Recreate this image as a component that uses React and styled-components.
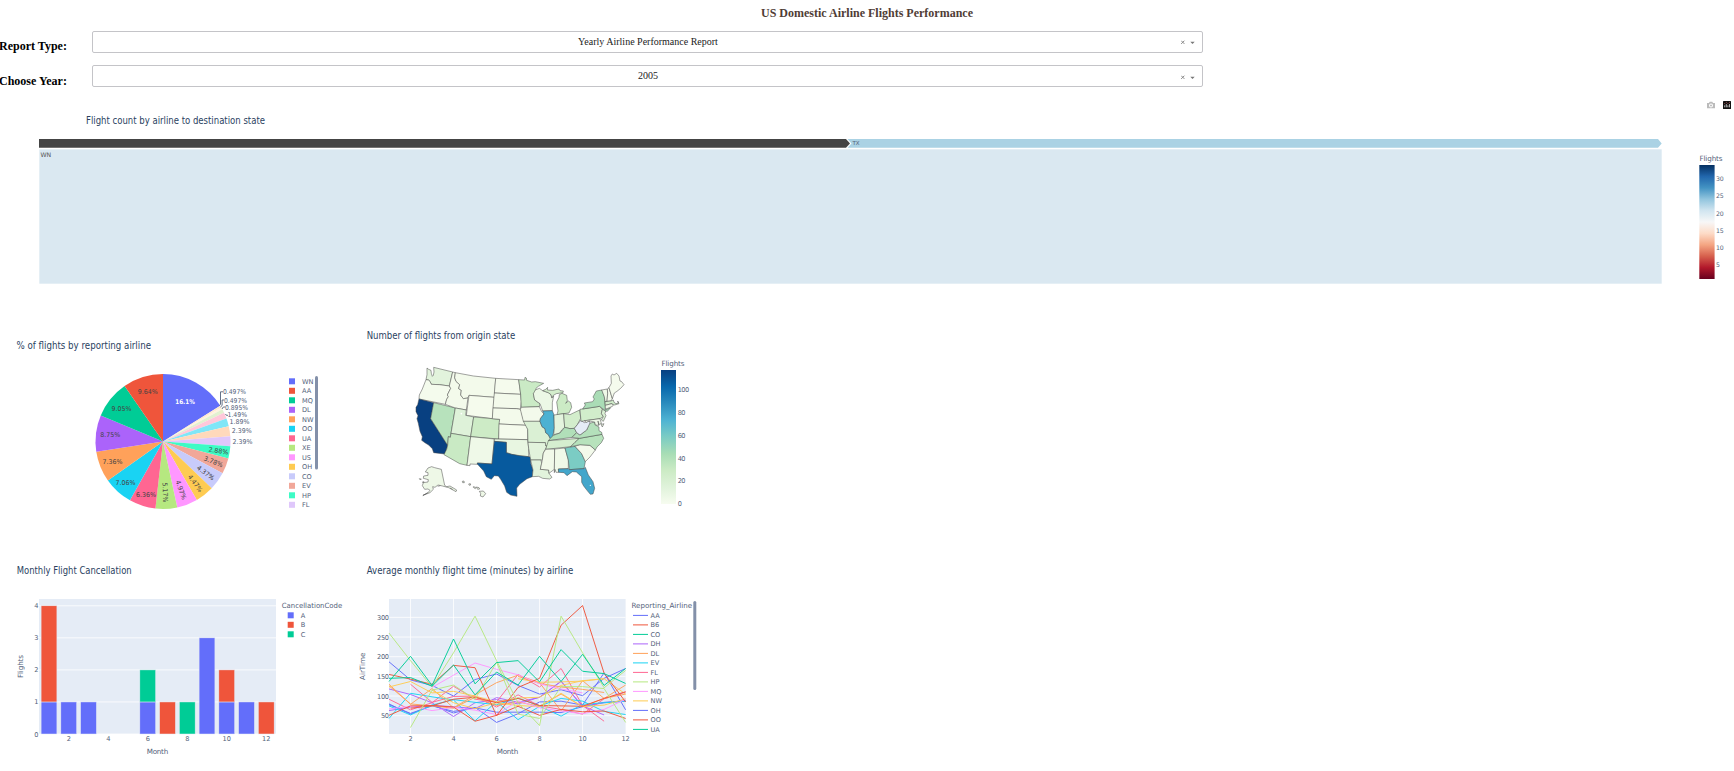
import React from 'react';
import styled, { createGlobalStyle } from 'styled-components';

const GlobalStyle = createGlobalStyle`
  body {
    margin: 0;
    background: #fff;
    overflow: hidden;
    font-family: "Liberation Serif", serif;
  }
`;

const Page = styled.main`
  width: 1734px;
  height: 771px;
  overflow: hidden;
`;

const Heading = styled.h1`
  margin: 0;
  padding-top: 5px;
  height: 26px;
  box-sizing: border-box;
  text-align: center;
  color: #503d36;
  font-size: 12px;
  line-height: 16px;
`;

const Fields = styled.section`
  display: flex;
  flex-direction: column;
  gap: 12px;
  padding-top: 5px;
  height: 64px;
  box-sizing: border-box;
`;

const Field = styled.div`
  display: grid;
  grid-template-columns: 92px 1111px;
  height: 22px;
`;

const FieldLabel = styled.label`
  font-size: 12px;
  font-weight: bold;
  line-height: 16px;
  padding-top: ${(p) => p.$drop}px;
  margin-left: -1px;
  white-space: nowrap;
`;

const Select = styled.div`
  display: flex;
  align-items: center;
  box-sizing: border-box;
  height: 22px;
  border: 1px solid #c4c4c8;
  border-radius: 2px;
  padding-right: 7px;
`;

const SelectValue = styled.span`
  flex: 1;
  padding-left: 22px;
  text-align: center;
  font-size: 10px;
  line-height: 20px;
  color: #222;
`;

const Charts = styled.section`
  display: grid;
  grid-template-columns: 360px 360px;
  grid-template-rows: 235px 216px;
`;

const Chart = styled.svg`
  display: block;
  overflow: visible;
  font-family: "DejaVu Sans", Verdana, sans-serif;
  font-size: ${(p) => p.$size || 6.6}px;
  fill: #53627a;
`;

const ChartTitle = styled.text`
  font-family: "DejaVu Sans Condensed", "DejaVu Sans", sans-serif;
  font-stretch: condensed;
  font-size: 9.7px;
  fill: #2a3f5f;
`;

function Title({ x, y, w, children }) {
  return (
    <ChartTitle x={x} y={y} textLength={w} lengthAdjust="spacingAndGlyphs">
      {children}
    </ChartTitle>
  );
}

function Dropdown({ label, value, drop, iconDrop }) {
  return (
    <Field>
      <FieldLabel $drop={drop}>{label}</FieldLabel>
      <Select>
        <SelectValue>{value}</SelectValue>
        <svg width="14" height="8" viewBox={`0 ${-iconDrop} 14 8`}>
          <path d="M.2 2.7l3.2 3.2m0-3.2l-3.2 3.2" stroke="#888" />
          <path d="M9.3 3.7h4.4l-2.2 2.2z" fill="#777" />
        </svg>
      </Select>
    </Field>
  );
}

const RDBU = ['#053061', '#2166ac', '#4393c3', '#92c5de', '#d1e5f0', '#f7f7f7', '#fddbc7', '#f4a582', '#d6604d', '#b2182b', '#67001f'];
const GNBU = ['#084081', '#0868ac', '#2b8cbe', '#4eb3d3', '#7bccc4', '#a8ddb5', '#ccebc5', '#e0f3db', '#f7fcf0'];

function Scale({ id, colors, x, y, w, h }) {
  return (
    <>
      <linearGradient id={id} x1="0" y1="0" x2="0" y2="1">
        {colors.map((c, i) => (
          <stop key={c} offset={i / (colors.length - 1)} stopColor={c} />
        ))}
      </linearGradient>
      <rect x={x} y={y} width={w} height={h} fill={`url(#${id})`} />
    </>
  );
}

function Treemap() {
  return (
    <Chart width="1734" height="230" viewBox="0 90 1734 230" $size={6.2}>
      <Title x="86" y="124" w="179">Flight count by airline to destination state</Title>
      <path d="M39 139H846l4 4.4-4 4.4H39z" fill="#444" />
      <path d="M847.5 139H1658l3.7 4.4-3.7 4.4H847.5l4-4.4z" fill="#aad2e4" />
      <rect x="39.3" y="149.3" width="1622.4" height="134.4" fill="#dae8f1" />
      <text x="852.5" y="145.4" fontSize="5.5">TX</text>
      <text x="40.5" y="157.2" fill="#555">WN</text>
      <path fill="#bbb" fillRule="evenodd" d="M1707 103h2l.7-1.2h2.6l.7 1.2h2v5.2h-8zM1711 103.5a2 2 0 100 4 2 2 0 000-4zM1711 104.5a1 1 0 110 2 1 1 0 010-2z" />
      <rect x="1723" y="101" width="8" height="8" fill="#111" rx=".5" />
      <path d="M1724.7 107.3v-2m1.6 2v-3.2m1.6 3.2v-2m1.6 2v-3.2" stroke="#ddd" strokeWidth=".8" />
      <path d="M1724.3 103.6h.8m.8-1.2h.8m.8 1.2h.8m.8-1.2h.8" stroke="#c66" strokeWidth=".8" />
      <text x="1699.5" y="161" fontSize="7.2" textLength="23">Flights</text>
      <Scale id="rdbu" colors={RDBU} x={1699.3} y={165} w={15.3} h={114} />
      {[30, 25, 20, 15, 10, 5].map((n, i) => (
        <text key={n} x="1716" y={181 + i * 17.25} textLength={n > 9 ? 7.7 : 4}>{n}</text>
      ))}
    </Chart>
  );
}

const SLICES = [
  [16.1, '#636efa'], [0.497, '#ffe9cf'], [0.497, '#fff3df'], [0.895, '#e2f1d0'],
  [1.49, '#ffc8da'], [1.89, '#7fe6f7'], [2.39, '#ffd9bb'], [2.39, '#dfc7fb'],
  [2.88, '#3dfbc5'], [3.78, '#f1a799'], [4.37, '#c8cbfb'], [4.47, '#fecb52'],
  [4.97, '#ff97ff'], [5.17, '#b6e880'], [6.36, '#ff6692'], [7.06, '#19d3f3'],
  [7.36, '#ffa15a'], [8.75, '#ab63fa'], [9.05, '#00cc96'], [9.64, '#ef553b'],
];

const PIE_LEGEND = [
  ['WN', '#636efa'], ['AA', '#ef553b'], ['MQ', '#00cc96'], ['DL', '#ab63fa'],
  ['NW', '#ffa15a'], ['OO', '#19d3f3'], ['UA', '#ff6692'], ['XE', '#b6e880'],
  ['US', '#ff97ff'], ['OH', '#fecb52'], ['CO', '#c8cbfb'], ['EV', '#f1a799'],
  ['HP', '#3dfbc5'], ['FL', '#dfc7fb'],
];

const INNER_LABELS = [
  ['9.64%', 147.7, 391.6, 0], ['9.05%', 121.6, 408.7, 0], ['8.75%', 110.2, 434.7, 0],
  ['7.36%', 112.4, 461.6, 0], ['7.06%', 125.6, 482.7, 0], ['6.36%', 146, 494.8, 0],
  ['5.17%', 165.4, 492.5, 88], ['4.97%', 181.2, 489.8, 70], ['4.47%', 195.4, 483.2, 53],
  ['4.37%', 205.8, 472.7, 37], ['3.78%', 213.4, 461.5, 22], ['2.88%', 218.4, 450.6, 9],
];

const OUTER_LABELS = [
  ['0.497%', 223, 391.8, 23], ['0.497%', 224, 400, 23], ['0.895%', 225, 407, 23],
  ['1.49%', 227.5, 414.8, 19.5], ['1.89%', 229.5, 421.8, 20], ['2.39%', 231.7, 430.8, 20], ['2.39%', 232.5, 441.8, 20],
];

function Pie() {
  const cx = 163, cy = 441.5, r = 67.5;
  let angle = 0;
  const point = (a) => `${cx + r * Math.sin(a)} ${cy - r * Math.cos(a)}`;
  return (
    <Chart width="360" height="235" viewBox="0 320 360 235">
      <Title x="16.5" y="349" w="134.5">% of flights by reporting airline</Title>
      {SLICES.map(([v, color], i) => {
        const start = angle;
        angle += (v / 100.009) * Math.PI * 2;
        return <path key={i} fill={color} d={`M${cx} ${cy}L${point(start)}A${r} ${r} 0 0 1 ${point(angle)}z`} />;
      })}
      <text x="175.3" y="404" fill="#fff" fontWeight="bold" fontSize="6.4" textLength="19.5" lengthAdjust="spacingAndGlyphs">16.1%</text>
      {INNER_LABELS.map(([t, x, y, a]) => (
        <text key={t} transform={`translate(${x} ${y}) rotate(${a})`} x="-10" y="2.5" fill="#444" textLength="20" lengthAdjust="spacingAndGlyphs">{t}</text>
      ))}
      {OUTER_LABELS.map(([t, x, y, w], i) => (
        <text key={i} x={x} y={y + 2.5} textLength={w} lengthAdjust="spacingAndGlyphs">{t}</text>
      ))}
      <path d="M219.5 405.5l1-1.2V391.8h2.5M220.5 407l1.6-1.5V400h2M222 409l1.3-2h2M225.5 414l.8 1.3h1.7" fill="none" stroke="#53627a" strokeWidth=".9" />
      {PIE_LEGEND.map(([n, color], i) => (
        <g key={n}>
          <rect x="289" y={378.3 + i * 9.5} width="6" height="6" fill={color} />
          <text x="302" y={383.8 + i * 9.5}>{n}</text>
        </g>
      ))}
      <rect x="315" y="376" width="3" height="93.5" rx="1.5" fill="#8390a9" />
    </Chart>
  );
}

const STATES = [
  ['WA', '#e2f3dc', '201,144 206,148 213,151 214,160 217,169 220,166 222,156 221,142 278,156 268,198 238,194 214,193 210,184 205,180 198,179 201,164'],
  ['OR', '#f4fbed', '198,179 205,180 210,184 214,193 238,194 268,198 272,205 262,225 265,230 260,238 256,253 177,237 178,225 187,207'],
  ['CA', '#084081', '177,237 221,248 212,296 263,376 260,388 254,402 221,398 217,386 206,375 196,369 185,361 187,350 180,334 175,310 171,296 174,287 168,275 168,262 173,254'],
  ['NV', '#b7e2bc', '221,248 286,264 273,340 271,352 265,350 263,376 212,296'],
  ['ID', '#f3faeb', '278,156 286,158 284,173 288,184 299,194 296,206 304,211 302,225 310,236 324,233 319,270 286,264 256,253 260,238 265,230 262,225 272,205 268,198'],
  ['MT', '#f3faeb', '286,158 340,168 407,175 403,232 327,226 324,233 310,236 302,225 304,211 296,206 299,194 288,184 284,173'],
  ['WY', '#f5fbed', '327,226 403,232 397,296 319,286'],
  ['UT', '#def2d9', '286,264 319,270 317,286 341,291 332,350 273,340'],
  ['CO', '#cdebc6', '341,291 419,298 416,357 332,350'],
  ['AZ', '#c9eac4', '273,340 332,350 321,436 299,431 252,404 260,388 263,376 265,350 271,352'],
  ['NM', '#eff9e8', '332,350 403,357 396,432 352,429 353,433 330,432 330,437 321,436'],
  ['ND', '#f5fbed', '407,175 476,179 479,200 482,223 403,219'],
  ['SD', '#f3faeb', '403,219 482,223 484,245 481,268 470,266 399,264'],
  ['NE', '#f3faeb', '399,264 470,266 481,268 485,275 488,291 492,301 500,316 417,312 419,298 397,296'],
  ['KS', '#f5fbed', '417,312 500,316 503,328 503,359 416,357'],
  ['OK', '#e8f6e1', '403,357 503,359 506,385 506,410 480,408 455,403 439,398 439,367 403,364'],
  ['TX', '#075a9e', '403,364 439,367 439,398 455,403 480,407 506,410 512,411 512,430 519,450 517,470 501,476 479,493 470,504 471,529 452,525 440,517 434,498 422,478 415,468 403,467 394,478 379,470 371,453 352,432 352,429 396,432'],
  ['MN', '#caeac5', '476,179 494,180 495,172 499,174 500,181 515,186 526,185 551,190 535,199 528,205 526,215 520,221 524,240 540,251 538,260 484,262 482,223'],
  ['IA', '#f3faeb', '484,262 538,260 545,275 552,282 541,296 540,304 490,304 481,268'],
  ['MO', '#daf0d4', '490,304 540,304 546,320 555,326 557,338 565,344 571,356 561,378 555,378 556,368 504,367 503,328'],
  ['AR', '#e2f3dc', '504,367 556,368 557,378 561,379 550,399 547,420 512,420 510,409 506,385'],
  ['LA', '#e2f3dc', '512,420 543,420 545,430 541,448 566,450 567,460 576,472 569,477 548,475 536,469 517,470 519,450'],
  ['WI', '#ecf8e6', '526,210 538,205 548,212 565,218 573,224 575,233 581,228 577,248 577,272 548,273 540,251 524,240 520,221'],
  ['UP', '#d3edcc', '548,212 557,208 563,202 562,210 578,211 597,207 600,212 610,213 609,218 589,221 580,226 576,234 573,224 565,218'],
  ['MI', '#ccebc5', '598,224 606,220 620,226 622,242 617,250 625,243 632,248 635,262 627,279 611,281 591,284 594,273 590,246 597,232'],
  ['IL', '#4cb1d2', '548,273 577,272 582,285 583,325 578,350 571,356 565,344 557,338 555,326 546,320 540,304 541,296 552,282'],
  ['IN', '#e4f4de', '582,285 611,281 614,322 605,330 600,339 581,344 583,325'],
  ['OH', '#d3edcc', '611,281 630,284 640,279 659,270 662,295 652,314 643,325 630,326 614,322'],
  ['KY', '#b1dfb9', '580,346 600,339 614,322 630,326 643,325 650,338 636,352 565,362 571,355'],
  ['TN', '#d5eecf', '565,362 658,355 645,367 632,380 557,388'],
  ['MS', '#f1f9e9', '557,388 584,387 583,448 567,460 566,450 541,448 547,420 550,399'],
  ['AL', '#f0f9e8', '584,387 615,384 625,420 625,446 595,447 596,457 588,457 585,448 583,458'],
  ['GA', '#7bccc4', '615,384 645,379 665,401 676,425 672,446 628,449 625,420'],
  ['FL', '#43a6cb', '595,447 625,446 628,449 672,446 676,442 685,465 699,485 704,505 699,522 691,523 681,511 671,498 665,487 665,470 649,456 637,455 621,467 612,458 596,457'],
  ['SC', '#f3faeb', '645,379 660,374 690,376 706,390 690,411 676,425 665,401'],
  ['NC', '#b7e2bc', '632,380 645,367 658,355 726,343 731,355 724,368 711,381 706,390 690,376 660,374'],
  ['VA', '#b4e0bb', '650,338 660,345 680,330 688,310 704,306 706,315 717,321 717,332 725,337 726,343 658,355 636,352'],
  ['WV', '#e5ecf6', '643,325 652,314 662,301 673,308 688,303 690,309 680,330 660,345 650,338'],
  ['PA', '#d1edcb', '660,268 719,259 727,268 724,280 730,290 720,296 663,304'],
  ['MD', '#eef8e7', '673,302 720,296 725,313 732,311 727,321 722,311 716,314 714,303 717,316 706,315 704,306 688,303 679,307'],
  ['NJ', '#daf0d4', '727,268 737,273 735,281 738,287 730,304 724,300 730,290 724,280'],
  ['NY', '#aadcb6', '668,267 676,255 673,249 698,245 703,237 699,231 709,213 726,210 733,230 736,262 736,270 752,263 742,274 737,273 719,259'],
  ['VT', '#eef8e7', '725,210 742,207 743,220 741,244 735,245 733,230'],
  ['NH', '#f5fbed', '742,207 747,203 757,236 753,243 741,244 743,220'],
  ['ME', '#f5fbed', '747,203 754,190 753,168 757,162 762,165 770,160 777,168 780,183 785,185 792,194 782,205 771,214 763,219 757,236'],
  ['MA', '#d1edcb', '735,245 753,243 760,240 762,247 768,251 775,249 773,243 777,251 764,255 755,251 736,256'],
  ['CT', '#eef8e7', '736,256 755,251 760,257 753,261 741,266 736,266'],
  ['AK', '#eef8e7', '215,440 224,443 244,448 254,496 260,500 270,498 290,510 288,515 266,503 247,498 234,495 225,502 218,500 220,508 210,518 189,526 203,519 210,511 204,507 194,508 187,497 190,488 204,486 205,479 190,475 191,468 204,466 204,458 196,456 204,444'],
  ['HI', '#eef8e7', '358,514 370,513 377,521 369,531 361,528 362,520'],
  ['HI2', '#eef8e7', '340,500 347,502 346,506 340,502'],
  ['HI3', '#eef8e7', '349,501 357,503 359,507 353,508'],
  ['HI4', '#eef8e7', '326,492 331,491 332,495 328,496'],
  ['HI5', '#eef8e7', '307,484 312,483 313,488 308,488'],
  ['AK2', '#eef8e7', '178,476 184,477 181,480'],
  ['AK3', '#eef8e7', '187,486 192,485 190,489'],
];

function StatesMap() {
  return (
    <Chart width="360" height="235" viewBox="360 320 360 235">
      <Title x="366.7" y="339" w="148.5">Number of flights from origin state</Title>
      <g transform="translate(360 320) scale(.33333)" stroke="#444" strokeOpacity=".75" strokeWidth="2" strokeLinejoin="round">
        {STATES.map(([id, fill, points]) => (
          <polygon key={id} fill={fill} points={points} />
        ))}
        <circle cx="304" cy="281" r="2.5" fill="#fff" stroke="none" />
        <circle cx="691" cy="496" r="2" fill="#fff" stroke="none" />
        <path d="M203 518l-15 9M233 499l8-2M270 504l8 4" fill="none" />
      </g>
      <text x="661.5" y="366" fontSize="7.2" textLength="23">Flights</text>
      <Scale id="gnbu" colors={GNBU} x={661} y={370} w={15} h={134} />
      {[100, 80, 60, 40, 20, 0].map((n, i) => (
        <text key={n} x="677.7" y={392 + i * 22.85} textLength={n > 99 ? 11.4 : n ? 7.8 : 3.8}>{n}</text>
      ))}
    </Chart>
  );
}

const BARS = [
  [1, 0, 1, 'A'], [1, 1, 3, 'B'], [2, 0, 1, 'A'], [3, 0, 1, 'A'], [6, 0, 1, 'A'],
  [6, 1, 1, 'C'], [7, 0, 1, 'B'], [8, 0, 1, 'C'], [9, 0, 3, 'A'], [10, 0, 1, 'A'],
  [10, 1, 1, 'B'], [11, 0, 1, 'A'], [12, 0, 1, 'B'],
];
const CODES = { A: '#636efa', B: '#ef553b', C: '#00cc96' };

function Cancellations() {
  const cx = (m) => 49 + (m - 1) * 19.75;
  const y = (v) => 734 - v * 32.05;
  return (
    <Chart width="360" height="216" viewBox="0 555 360 216">
      <Title x="16.7" y="574" w="115">Monthly Flight Cancellation</Title>
      <rect x="39" y="599" width="237" height="135" fill="#e5ecf6" />
      {[0, 1, 2, 3, 4].map((v) => (
        <g key={v}>
          <path d={`M39 ${y(v)}H276`} stroke="#fff" strokeWidth=".8" />
          <text x="38.5" y={y(v) + 2.5} textAnchor="end">{v}</text>
        </g>
      ))}
      {BARS.map(([m, base, n, code]) => (
        <rect key={`${m}${code}`} x={cx(m) - 7.9} y={y(base + n)} width="15.8" height={n * 32.05} fill={CODES[code]} stroke="#e5ecf6" strokeWidth=".5" />
      ))}
      {[2, 4, 6, 8, 10, 12].map((m) => (
        <text key={m} x={cx(m)} y="741" textAnchor="middle">{m}</text>
      ))}
      <text x="146.7" y="754" fontSize="7.2" textLength="21.5">Month</text>
      <text transform="translate(23 678) rotate(-90)" fontSize="7.2" textLength="23">Flights</text>
      <text x="281.7" y="608" fontSize="7.2" textLength="60.5" lengthAdjust="spacingAndGlyphs">CancellationCode</text>
      {Object.entries(CODES).map(([code, color], i) => (
        <g key={code}>
          <rect x="287.7" y={612.3 + i * 9.5} width="6" height="6" fill={color} />
          <text x="300.7" y={617.8 + i * 9.5}>{code}</text>
        </g>
      ))}
    </Chart>
  );
}

const LINES = [
  ['#636efa', 1, [187, 141, 127, 100, 142, 156, 127, 105, 116, 101, 145, 170]],
  ['#636efa', 1, [80, 54, 77, 57, 71, 33, 55, 85, 87, 77, 159, 65]],
  ['#636efa', 1, [78, 56, 75, 61, 70, 59, 59, 59, 58, 73, 84, 88]],
  ['#ab63fa', 1, [118, 104, 83, 48, 83, 91, 80, 97, 137, 75, 52]],
  ['#ab63fa', 1, [63, 72, 76, 73, 68, 96, 84, 97, 138, 73, 83, 87]],
  ['#ff6692', 1, [92, 65, 83, 125, 92, 85, 155, 123, 170, 76, 36]],
  ['#ff6692', 2, [130, 84, 99, 100, 72, 103, 75, 66, 54, 93, 110]],
  ['#19d3f3', 1, [43, 107, 98, 90, 37, 86, 40, 74, 49, 79, 83, 87]],
  ['#19d3f3', 1, [75, 52, 77, 91, 84, 78, 95, 75, 94, 87, 61, 53]],
  ['#ffa15a', 1, [130, 79, 119, 70, 103, 134, 153, 134, 62, 139, 94, 128]],
  ['#ffa15a', 1, [126, 80, 75, 69, 97, 76, 85, 74, 105, 73, 94, 105]],
  ['#fecb52', 1, [123, 137, 108, 112, 100, 85, 95, 97, 127, 139, 144, 105]],
  ['#fecb52', 3, [115, 83, 68, 83, 76, 73, 107, 73, 77, 93]],
  ['#fecb52', 7, [144, 135, 136, 138, 144]],
  ['#ffa15a', 7, [150, 132, 123, 117, 109]],
  ['#ff97ff', 1, [67, 74, 63, 71, 64, 53, 88, 70, 62, 55, 66, 92]],
  ['#ff97ff', 3, [122, 153, 184, 168, 154, 131, 118, 108]],
  ['#ef553b', 1, [155, 143, 130, 178, 172, 50, 122, 145, 280, 330, 158, 85]],
  ['#ef553b', 1, [51, 75, 76, 72, 36, 51, 74, 51, 66, 60, 62, 43]],
  ['#ef553b', 2, [69, 75, 92, 97, 83, 94, 76, 75, 74, 94, 111]],
  ['#b6e880', 1, [260, 190, 123, 210, 303, 190, 83, 25, 303, 210, 121, 165]],
  ['#b6e880', 2, [20, 115, 128, 92, 186, 54, 43, 124, 124, 119, 33]],
  ['#00cc96', 1, [137, 201, 127, 245, 131, 185, 190, 136, 218, 163, 157, 132]],
  ['#00cc96', 1, [145, 147, 125, 179, 103, 161, 128, 201, 137, 206, 127, 170]],
];
const AIRLINES = [
  ['AA', '#636efa'], ['B6', '#ef553b'], ['CO', '#00cc96'], ['DH', '#ab63fa'], ['DL', '#ffa15a'],
  ['EV', '#19d3f3'], ['FL', '#ff6692'], ['HP', '#b6e880'], ['MQ', '#ff97ff'], ['NW', '#fecb52'],
  ['OH', '#636efa'], ['OO', '#ef553b'], ['UA', '#00cc96'],
];

function FlightTimes() {
  const x = (m) => 389 + (m - 1) * 21.51;
  const y = (v) => 735.4 - v * 0.3935;
  return (
    <Chart width="360" height="216" viewBox="360 555 360 216">
      <Title x="366.8" y="574" w="206.5">Average monthly flight time (minutes) by airline</Title>
      <rect x="389" y="599" width="236.6" height="135" fill="#e5ecf6" />
      {[50, 100, 150, 200, 250, 300].map((v) => (
        <g key={v}>
          <path d={`M389 ${y(v)}h236.6`} stroke="#fff" strokeWidth=".8" />
          <text x={v < 100 ? 381 : 377} y={y(v) + 2.5} textLength={v < 100 ? 8 : 12}>{v}</text>
        </g>
      ))}
      {[2, 4, 6, 8, 10, 12].map((m) => (
        <g key={m}>
          {m < 12 && <path d={`M${x(m)} 599v135`} stroke="#fff" strokeWidth=".8" />}
          <text x={x(m)} y="741" textAnchor="middle">{m}</text>
        </g>
      ))}
      <g fill="none" strokeWidth=".95">
        {LINES.map(([color, first, values], i) => (
          <polyline key={i} stroke={color} points={values.map((v, j) => `${x(first + j)},${y(v)}`).join(' ')} />
        ))}
      </g>
      <text x="496.7" y="754" fontSize="7.2" textLength="21.5">Month</text>
      <text transform="translate(365 680) rotate(-90)" fontSize="7.2" textLength="27.5">AirTime</text>
      <text x="631.5" y="608" fontSize="7.2" textLength="60.5" lengthAdjust="spacingAndGlyphs">Reporting_Airline</text>
      {AIRLINES.map(([n, color], i) => (
        <g key={n}>
          <path d={`M633 ${615.4 + i * 9.5}h15`} stroke={color} />
          <text x="650.5" y={617.9 + i * 9.5}>{n}</text>
        </g>
      ))}
      <rect x="693.3" y="601" width="3" height="89" rx="1.5" fill="#8390a9" />
    </Chart>
  );
}

export default function App() {
  return (
    <Page>
      <GlobalStyle />
      <Heading>US Domestic Airline Flights Performance</Heading>
      <Fields>
        <Dropdown label="Report Type:" value="Yearly Airline Performance Report" drop={7} iconDrop={0} />
        <Dropdown label="Choose Year:" value="2005" drop={8} iconDrop={1} />
      </Fields>
      <Treemap />
      <Charts>
        <Pie />
        <StatesMap />
        <Cancellations />
        <FlightTimes />
      </Charts>
    </Page>
  );
}
